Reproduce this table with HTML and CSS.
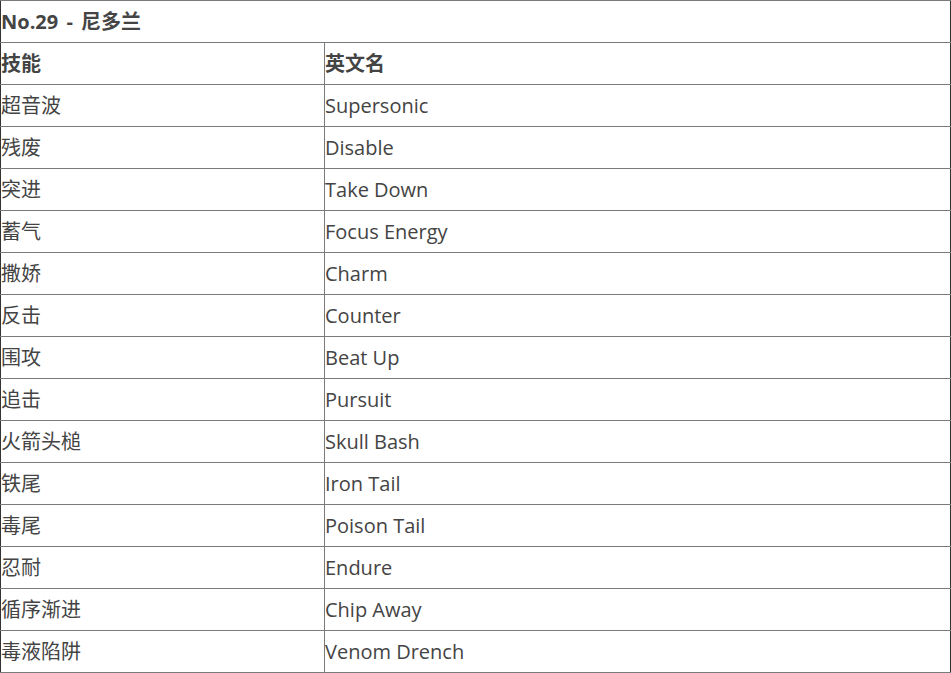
FILE: index.html
```html
<!DOCTYPE html>
<html lang="zh">
<head>
<meta charset="utf-8">
<link rel="stylesheet" href="styles.css">
</head>
<body>
<table class="moves">
  <tr class="title"><th colspan="2">No.29 - 尼多兰</th></tr>
  <tr class="head"><th class="c1">技能</th><th>英文名</th></tr>
  <tr><td class="c1">超音波</td><td>Supersonic</td></tr>
  <tr><td class="c1">残废</td><td>Disable</td></tr>
  <tr><td class="c1">突进</td><td>Take Down</td></tr>
  <tr><td class="c1">蓄气</td><td>Focus Energy</td></tr>
  <tr><td class="c1">撒娇</td><td>Charm</td></tr>
  <tr><td class="c1">反击</td><td>Counter</td></tr>
  <tr><td class="c1">围攻</td><td>Beat Up</td></tr>
  <tr><td class="c1">追击</td><td>Pursuit</td></tr>
  <tr><td class="c1">火箭头槌</td><td>Skull Bash</td></tr>
  <tr><td class="c1">铁尾</td><td>Iron Tail</td></tr>
  <tr><td class="c1">毒尾</td><td>Poison Tail</td></tr>
  <tr><td class="c1">忍耐</td><td>Endure</td></tr>
  <tr><td class="c1">循序渐进</td><td>Chip Away</td></tr>
  <tr><td class="c1">毒液陷阱</td><td>Venom Drench</td></tr>
</table>
</body>
</html>
```
FILE: styles.css
```css
html, body {
  margin: 0;
  padding: 0;
  background: #fff;
}
.moves {
  width: 951px;
  border-collapse: collapse;
  font-family: "Open Sans", "Noto Sans CJK SC", sans-serif;
  font-size: 20px;
  color: #444;
  border-left: 1px solid #333;
  border-right: 1px solid #333;
}
.moves th, .moves td {
  height: 41px;
  padding: 0;
  text-align: left;
  vertical-align: middle;
  border-top: 1px solid #7a7a7a;
  border-bottom: 1px solid #7a7a7a;
  line-height: 24px;
}
.moves th {
  font-weight: bold;
}
.moves .c1 {
  width: 323px;
  border-right: 1px solid #7a7a7a;
}
.title th {
  word-spacing: 3px;
}
```
